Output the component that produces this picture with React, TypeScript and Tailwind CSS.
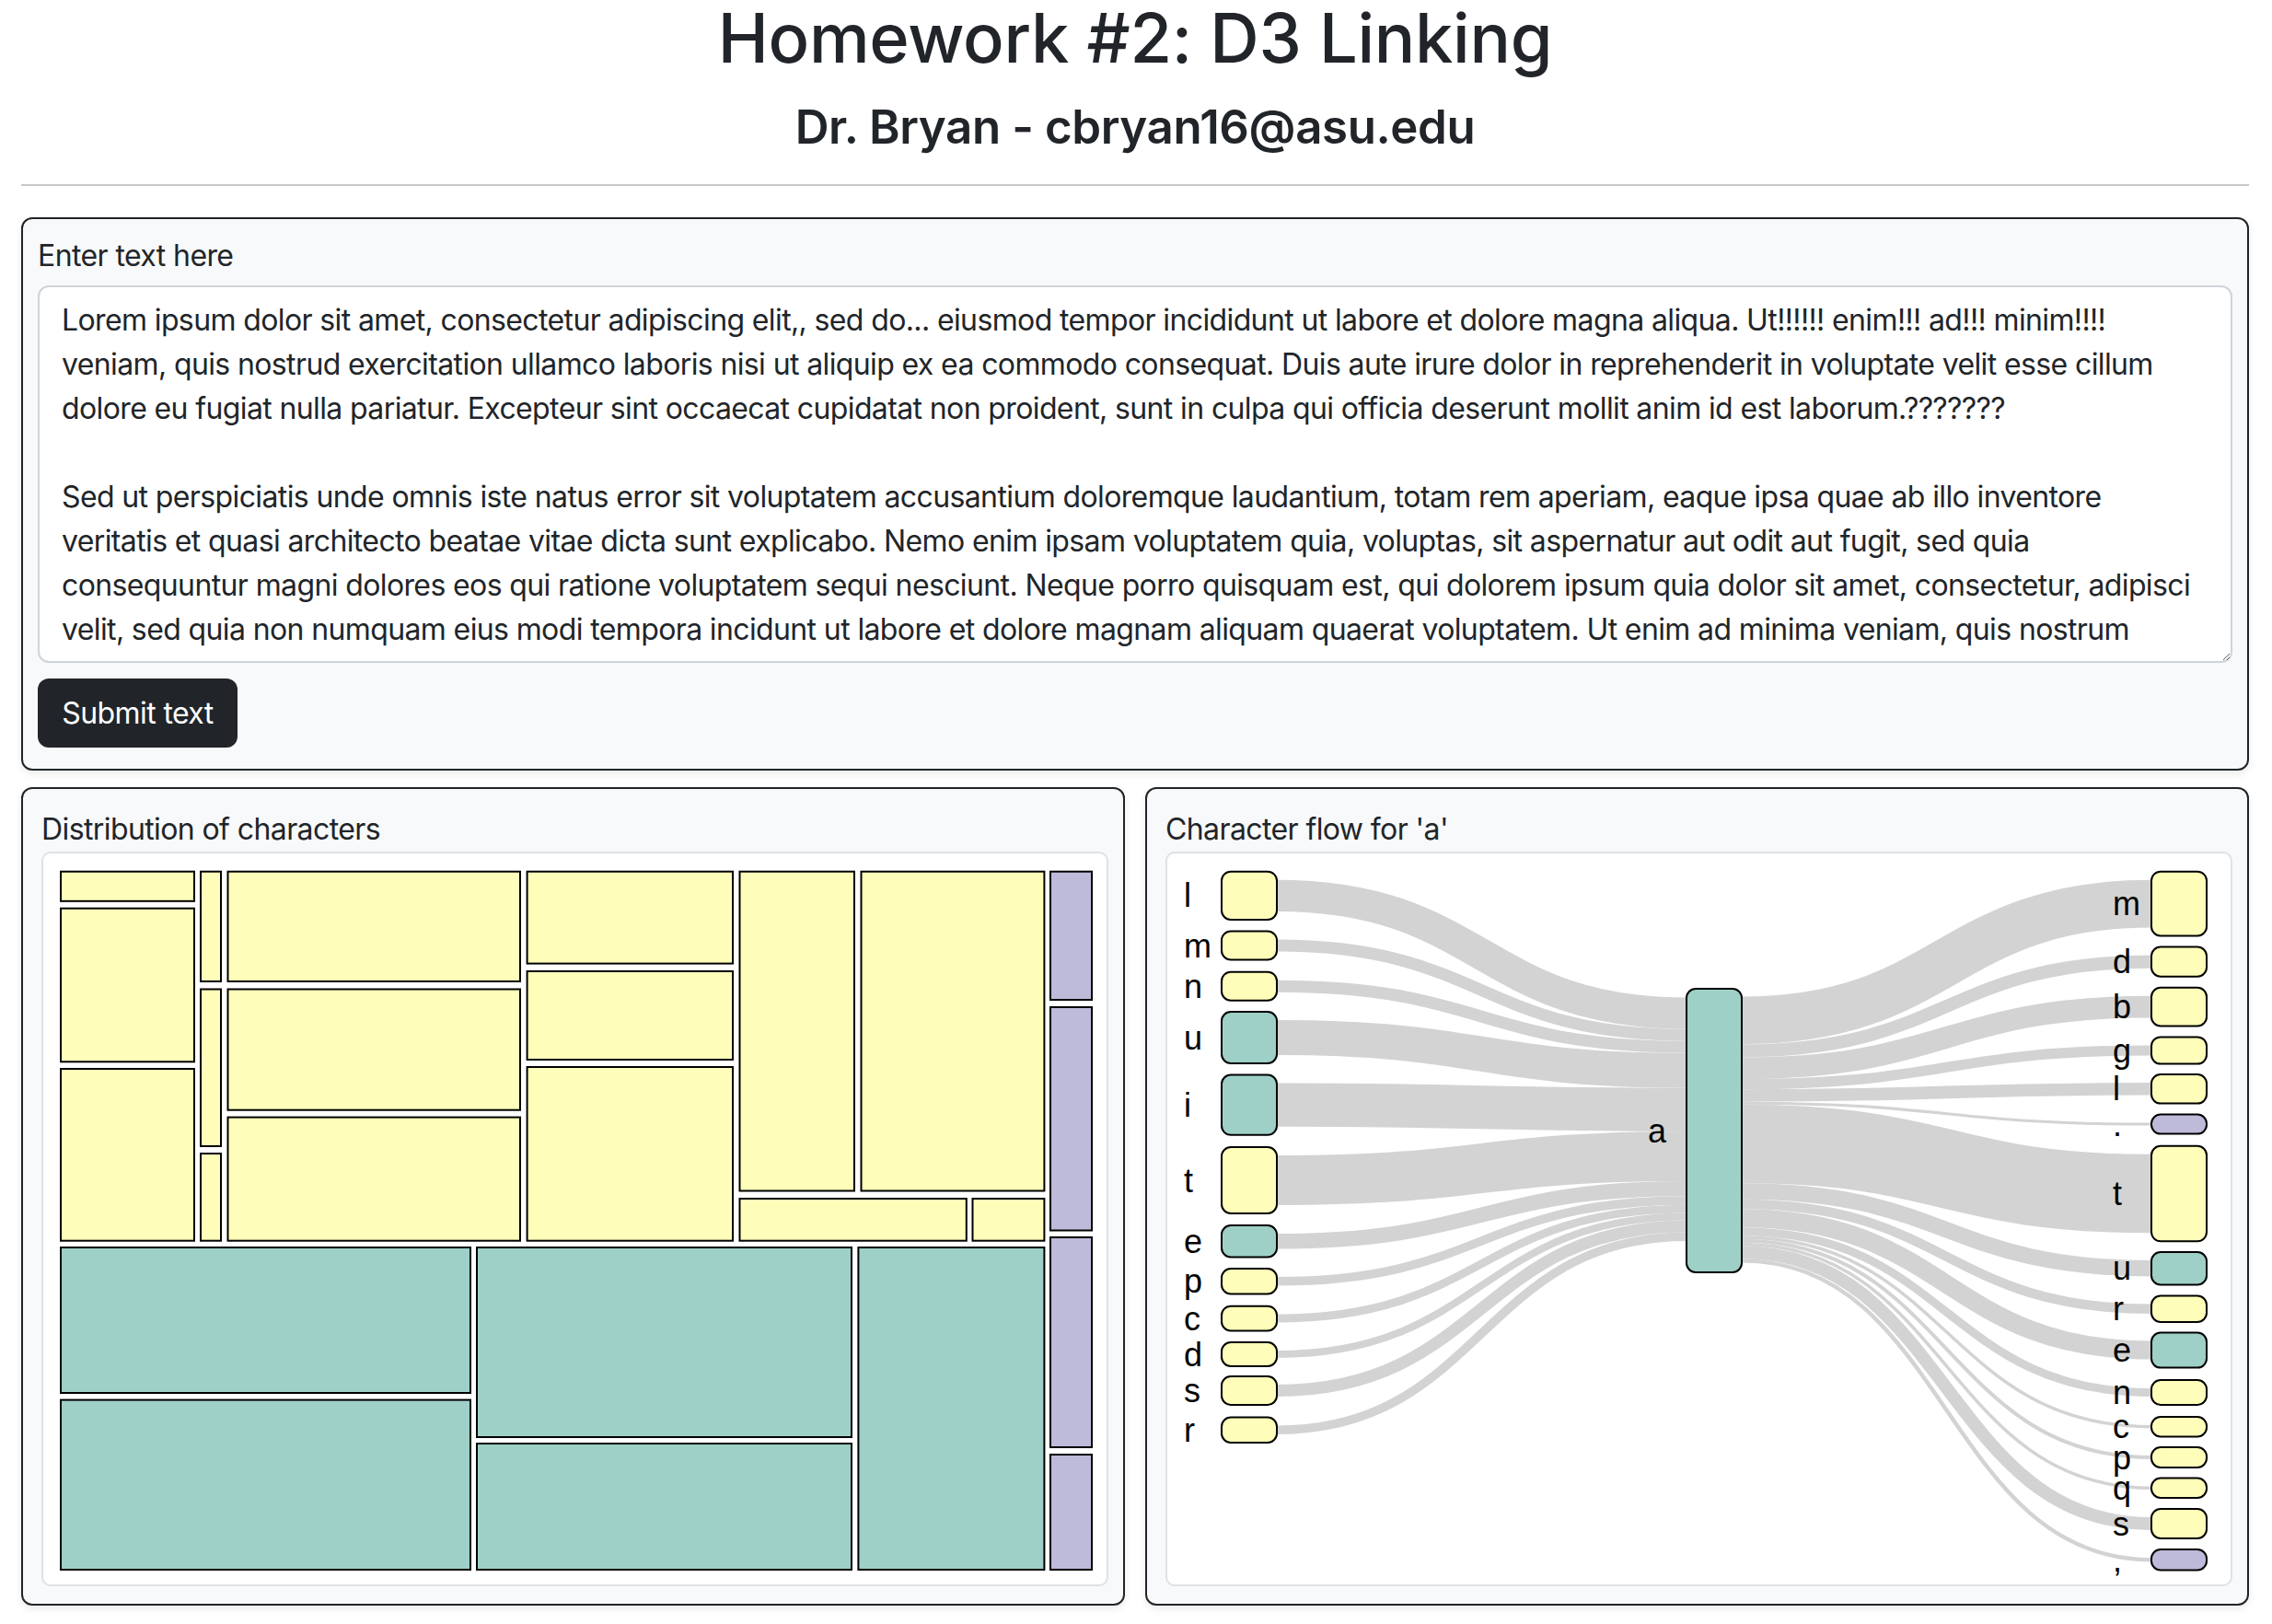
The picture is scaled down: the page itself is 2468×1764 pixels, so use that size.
import React from "react";

const YEL = "#fefeba";
const TEAL = "#9ed0c7";
const PURP = "#bebad9";

const TEXT = `Lorem ipsum dolor sit amet, consectetur adipiscing elit,, sed do... eiusmod tempor incididunt ut labore et dolore magna aliqua. Ut!!!!!! enim!!! ad!!! minim!!!!
veniam, quis nostrud exercitation ullamco laboris nisi ut aliquip ex ea commodo consequat. Duis aute irure dolor in reprehenderit in voluptate velit esse cillum
dolore eu fugiat nulla pariatur. Excepteur sint occaecat cupidatat non proident, sunt in culpa qui officia deserunt mollit anim id est laborum.???????

Sed ut perspiciatis unde omnis iste natus error sit voluptatem accusantium doloremque laudantium, totam rem aperiam, eaque ipsa quae ab illo inventore
veritatis et quasi architecto beatae vitae dicta sunt explicabo. Nemo enim ipsam voluptatem quia, voluptas, sit aspernatur aut odit aut fugit, sed quia
consequuntur magni dolores eos qui ratione voluptatem sequi nesciunt. Neque porro quisquam est, qui dolorem ipsum quia dolor sit amet, consectetur, adipisci
velit, sed quia non numquam eius modi tempora incidunt ut labore et dolore magnam aliquam quaerat voluptatem. Ut enim ad minima veniam, quis nostrum
exercitationem ullam corporis suscipit laboriosam, nisi ut aliquid ex ea commodi consequatur? Quis autem vel eum iure reprehenderit qui in ea voluptate`;

// treemap cells: x0, y0, x1, y1 (outer stroke edges), fill
const CELLS: [number, number, number, number, string][] = [
  [18, 18.7, 165, 52.8, YEL],
  [18, 58.7, 165, 227.3, YEL],
  [18, 233, 165, 421.7, YEL],
  [170, 18.7, 194, 140, YEL],
  [170, 146.5, 194, 319, YEL],
  [170, 325, 194, 421.7, YEL],
  [199.5, 18.7, 519, 140, YEL],
  [199.5, 146.5, 519, 279.7, YEL],
  [199.5, 285.6, 519, 421.7, YEL],
  [524.6, 18.7, 750, 120.6, YEL],
  [524.6, 127, 750, 225, YEL],
  [524.6, 231, 750, 421.7, YEL],
  [755.5, 18.7, 882, 367.5, YEL],
  [887.5, 18.7, 1088.4, 367.5, YEL],
  [755.5, 374, 1003.8, 421.7, YEL],
  [1008.5, 374, 1088.4, 421.7, YEL],
  [1093, 18.7, 1140, 160, PURP],
  [1093, 166, 1140, 410.5, PURP],
  [1093, 416, 1140, 646, PURP],
  [1093, 652, 1140, 779, PURP],
  [18, 427, 465, 587, TEAL],
  [18, 592.6, 465, 779, TEAL],
  [470, 427, 879, 635, TEAL],
  [470, 640, 879, 779, TEAL],
  [884.4, 427, 1088.4, 779, TEAL],
];

// sankey nodes: label, y0, y1, fill
const LEFT: [string, number, number, string][] = [
  ["l", 18.7, 72.9, YEL],
  ["m", 83.5, 116.5, YEL],
  ["n", 127.7, 160.7, YEL],
  ["u", 171, 229, TEAL],
  ["i", 239.6, 306.8, TEAL],
  ["t", 318, 392, YEL],
  ["e", 403, 439.4, TEAL],
  ["p", 450, 479.5, YEL],
  ["c", 490.7, 519.5, YEL],
  ["d", 530, 558, YEL],
  ["s", 567, 600, YEL],
  ["r", 611.5, 641, YEL],
];

const RIGHT: [string, number, number, string][] = [
  ["m", 18.7, 90.5, YEL],
  ["d", 100.6, 134.7, YEL],
  ["b", 144.8, 188.4, YEL],
  ["g", 198.4, 229.6, YEL],
  ["l", 239, 272.6, YEL],
  [".", 282.6, 305.6, PURP],
  ["t", 316.8, 422.3, YEL],
  ["u", 432, 469.4, TEAL],
  ["r", 479.5, 510, YEL],
  ["e", 519.5, 559.6, TEAL],
  ["n", 571, 600, YEL],
  ["c", 611, 634.4, YEL],
  ["p", 644, 668, YEL],
  ["q", 677.5, 701, YEL],
  ["s", 711, 745, YEL],
  [",", 755, 779.4, PURP],
];

const LX0 = 59;
const LX1 = 119;
const CX0 = 564;
const CX1 = 624;
const RX0 = 1069;
const RX1 = 1129;
const CY0 = 146;
const CY1 = 456;

function Treemap() {
  return (
    <svg width={1154} height={794} className="block">
      {CELLS.map(([x0, y0, x1, y1, fill], i) => (
        <rect
          key={i}
          x={x0 + 1}
          y={y0 + 1}
          width={x1 - x0 - 2}
          height={y1 - y0 - 2}
          fill={fill}
          stroke="#000"
          strokeWidth={2}
        />
      ))}
    </svg>
  );
}

function Sankey() {
  let inAcc = CY0 + 10.5;
  const inLinks = LEFT.map(([, y0, y1]) => {
    const w = Math.max(2, y1 - y0 - 20);
    const ty = inAcc + w / 2;
    inAcc += w;
    const sy = (y0 + y1) / 2;
    const mx = (LX1 + CX0) / 2;
    return { d: `M${LX1},${sy}C${mx},${sy} ${mx},${ty} ${CX0},${ty}`, w };
  });

  let outAcc = CY0 + 9.5;
  const outLinks = RIGHT.map(([, y0, y1]) => {
    const w = Math.max(2, y1 - y0 - 20);
    const sy = outAcc + w / 2;
    outAcc += w;
    const ty = (y0 + y1) / 2;
    const mx = (CX1 + RX0) / 2;
    return { d: `M${CX1},${sy}C${mx},${sy} ${mx},${ty} ${RX0},${ty}`, w };
  });

  return (
    <svg width={1154} height={794} className="block font-['Liberation_Sans',Arial,sans-serif]">
      {inLinks.map((l, i) => (
        <path key={`i${i}`} d={l.d} fill="none" stroke="#d3d3d3" strokeWidth={l.w} />
      ))}
      {outLinks.map((l, i) => (
        <path key={`o${i}`} d={l.d} fill="none" stroke="#d3d3d3" strokeWidth={l.w} />
      ))}

      {LEFT.map(([ch, y0, y1, fill]) => (
        <g key={`L${ch}`}>
          <rect x={LX0} y={y0 + 1} width={LX1 - LX0} height={y1 - y0 - 2} rx={10} fill={fill} stroke="#000" strokeWidth={2} />
          <text x={18} y={(y0 + y1) / 2} dy="0.35em" fontSize={36} fill="#000">
            {ch}
          </text>
        </g>
      ))}

      <rect x={CX0} y={CY0 + 1} width={CX1 - CX0} height={CY1 - CY0 - 2} rx={10} fill={TEAL} stroke="#000" strokeWidth={2} />
      <text x={542} y={(CY0 + CY1) / 2} dy="0.35em" fontSize={36} textAnchor="end" fill="#000">
        a
      </text>

      {RIGHT.map(([ch, y0, y1, fill]) => (
        <g key={`R${ch}`}>
          <rect x={RX0} y={y0 + 1} width={RX1 - RX0} height={y1 - y0 - 2} rx={10} fill={fill} stroke="#000" strokeWidth={2} />
          <text x={1027} y={(y0 + y1) / 2} dy="0.35em" fontSize={36} fill="#000">
            {ch}
          </text>
        </g>
      ))}
    </svg>
  );
}

function Panel({ title, children }: { title: string; children: React.ReactNode }) {
  return (
    <div className="rounded-[12px] border-2 border-[#212529] bg-[#f8f9fa] pt-[20px] pl-[20px] pr-[16px] pb-[19px] shadow-[0_4px_8px_rgba(0,0,0,0.075)]">
      <div className="text-[32px] leading-[48px] tracking-[-0.6px]">{title}</div>
      <div className="overflow-hidden rounded-[10px] border-2 border-[#dee2e6] bg-white">{children}</div>
    </div>
  );
}

export default function App() {
  return (
    <div className="min-h-[1764px] bg-white pl-[23px] pr-[25px] font-['Inter','Noto_Sans',sans-serif] text-[#212529]">
      {/* Header */}
      <div className="text-center">
        <h1 className="text-[74px] leading-[83px] font-medium tracking-[-0.3px]">Homework #2: D3 Linking</h1>
        <h3 className="mt-[24px] text-[51px] leading-[62px] font-semibold tracking-[-0.4px]">Dr. Bryan - cbryan16@asu.edu</h3>
      </div>
      <hr className="mt-[31px] border-0 border-t-2 border-[#c8c9ca]" />

      {/* Text input */}
      <div className="mt-[34px] rounded-[12px] border-2 border-[#212529] bg-[#f8f9fa] px-[16px] pt-[16px] pb-[23px] shadow-[0_4px_8px_rgba(0,0,0,0.075)]">
        <label className="block text-[32px] leading-[48px] tracking-[-0.6px]">Enter text here</label>
        <textarea
          readOnly
          wrap="off"
          value={TEXT}
          className="mt-[8px] block h-[410px] w-full resize-y overflow-hidden rounded-[12px] border-2 border-[#ced4da] bg-white px-[24px] py-[12px] text-[32px] leading-[48px] tracking-[-0.62px] text-[#212529] outline-none"
        />
        <button className="mt-[17px] h-[75px] w-[217px] rounded-[12px] bg-[#212529] text-[32px] leading-[48px] tracking-[-0.6px] text-white">
          Submit text
        </button>
      </div>

      {/* Charts */}
      <div className="mt-[18px] grid grid-cols-2 gap-[22px]">
        <Panel title="Distribution of characters">
          <Treemap />
        </Panel>
        <Panel title="Character flow for 'a'">
          <Sankey />
        </Panel>
      </div>
    </div>
  );
}
